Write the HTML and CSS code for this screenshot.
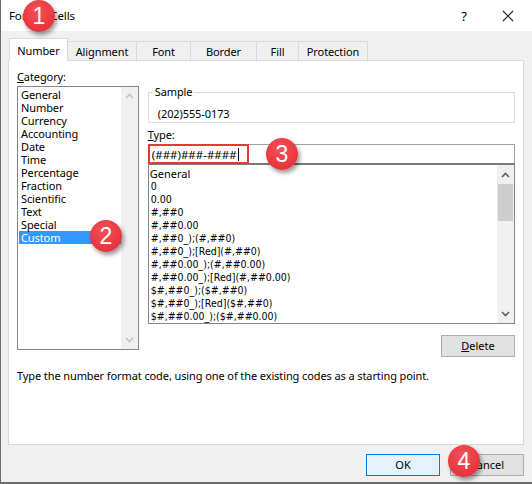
FILE: index.html
```html
<!DOCTYPE html>
<html>
<head>
<meta charset="utf-8">
<link rel="stylesheet" href="styles.css">
</head>
<body>
<div class="window">
  <div class="titlebar">
    <span class="title">Format Cells</span>
    <span class="help">?</span>
    <span class="close"><svg width="12" height="12" viewBox="0 0 12 12"><path d="M1 1L11 11M11 1L1 11" stroke="#222" stroke-width="1.1" fill="none"/></svg></span>
  </div>
  <div class="body">
    <div class="tabs">
      <div class="tab active">Number</div>
      <div class="tab w-align">Alignment</div>
      <div class="tab w-font">Font</div>
      <div class="tab w-border">Border</div>
      <div class="tab w-fill">Fill</div>
      <div class="tab w-prot">Protection</div>
    </div>
    <div class="panel">
      <div class="cols">
        <div class="leftcol">
          <div class="label"><u>C</u>ategory:</div>
          <div class="listbox">
            <div class="items">
              <div class="item">General</div>
              <div class="item">Number</div>
              <div class="item">Currency</div>
              <div class="item">Accounting</div>
              <div class="item">Date</div>
              <div class="item">Time</div>
              <div class="item">Percentage</div>
              <div class="item">Fraction</div>
              <div class="item">Scientific</div>
              <div class="item">Text</div>
              <div class="item">Special</div>
              <div class="item selected">Custom</div>
            </div>
            <div class="vscroll">
              <svg class="arr" width="9" height="6" viewBox="0 0 9 6"><path d="M1 5L4.5 1.5L8 5" stroke="#c2c2c2" stroke-width="1.6" fill="none"/></svg>
              <div class="track"></div>
              <svg class="arr" width="9" height="6" viewBox="0 0 9 6"><path d="M1 1L4.5 4.5L8 1" stroke="#c2c2c2" stroke-width="1.6" fill="none"/></svg>
            </div>
          </div>
        </div>
        <div class="rightcol">
          <fieldset class="group">
            <legend>Sample</legend>
            <div class="sample">(202)555-0173</div>
          </fieldset>
          <div class="label typelabel"><u>T</u>ype:</div>
          <div class="typeinput"><span class="highlight">(###)###-####<span class="caret"></span></span></div>
          <div class="fmtlist">
            <div class="fitems">
              <div class="fitem">General</div>
              <div class="fitem">0</div>
              <div class="fitem">0.00</div>
              <div class="fitem">#,##0</div>
              <div class="fitem">#,##0.00</div>
              <div class="fitem">#,##0_);(#,##0)</div>
              <div class="fitem">#,##0_);[Red](#,##0)</div>
              <div class="fitem">#,##0.00_);(#,##0.00)</div>
              <div class="fitem">#,##0.00_);[Red](#,##0.00)</div>
              <div class="fitem">$#,##0_);($#,##0)</div>
              <div class="fitem">$#,##0_);[Red]($#,##0)</div>
              <div class="fitem">$#,##0.00_);($#,##0.00)</div>
            </div>
            <div class="vscroll dark">
              <svg class="arr" width="9" height="6" viewBox="0 0 9 6"><path d="M1 5L4.5 1.5L8 5" stroke="#606060" stroke-width="1.6" fill="none"/></svg>
              <div class="track"><div class="thumb"></div></div>
              <svg class="arr" width="9" height="6" viewBox="0 0 9 6"><path d="M1 1L4.5 4.5L8 1" stroke="#606060" stroke-width="1.6" fill="none"/></svg>
            </div>
          </div>
          <div class="delrow"><button class="btn"><u>D</u>elete</button></div>
        </div>
      </div>
      <div class="desc">Type the number format code, using one of the existing codes as a starting point.</div>
    </div>
    <div class="footer">
      <button class="btn ok">OK</button>
      <button class="btn">Cancel</button>
    </div>
  </div>
  <div class="badge b1">1</div>
  <div class="badge b2">2</div>
  <div class="badge b3">3</div>
  <div class="badge b4">4</div>
</div>
</body>
</html>
```
FILE: styles.css
```css
* { box-sizing: border-box; }
html, body { margin: 0; padding: 0; }
body {
  width: 532px;
  height: 484px;
  overflow: hidden;
  font-family: "Noto Sans", "Liberation Sans", sans-serif;
  font-size: 11px;
  letter-spacing: -0.1px;
  color: #000;
  background: #fff;
}
.window {
  position: relative;
  width: 532px;
  height: 484px;
  border-left: 1px solid #6b6b6b;
  border-bottom: 2px solid #6b6b6b;
  display: flex;
  flex-direction: column;
}
.titlebar {
  height: 31px;
  background: #fff;
  display: flex;
  align-items: center;
  padding-left: 8px;
}
.title { font-size: 11.5px; flex: 1; }
.help { width: 20px; font-size: 13px; margin-right: 24px; text-align: center; }
.close { width: 20px; margin-right: 14px; display: flex; justify-content: center; }
.body {
  flex: 1;
  background: #f0f0f0;
  padding: 7px 8px 0 7px;
  display: flex;
  flex-direction: column;
}
.tabs {
  display: flex;
  height: 22px;
  align-items: flex-end;
  margin-left: 1px;
  position: relative;
  z-index: 1;
}
.tab {
  height: 19px;
  border: 1px solid #d9d9d9;
  border-left: none;
  border-bottom: none;
  display: flex;
  align-items: center;
  justify-content: center;
  background: #f0f0f0;
  line-height: 1;
  padding-top: 1px;
}
.tab.active {
  width: 59px;
  background: #fff;
  border-left: 1px solid #d9d9d9;
  margin-bottom: -1px;
  height: 23px;
}
.w-align { width: 69px; }
.w-font { width: 54px; }
.w-border { width: 66px; }
.w-fill { width: 42px; }
.w-prot { width: 69px; }
.panel {
  height: 385px;
  background: #fff;
  border: 1px solid #d9d9d9;
  padding: 8px 8px 0 8px;
  display: flex;
  flex-direction: column;
}
.cols { display: flex; gap: 9px; }
.leftcol { width: 122px; }
.label { height: 17px; line-height: 15px; }
.listbox {
  height: 264px;
  border: 1px solid #828790;
  display: flex;
  background: #fff;
}
.items { flex: 1; padding-top: 1px; padding-left: 1px; }
.item { height: 13px; line-height: 13px; padding-left: 2px; white-space: nowrap; }
.item.selected { background: #3399ff; color: #fff; }
.vscroll {
  width: 17px;
  background: #f0f0f0;
  display: flex;
  flex-direction: column;
  align-items: center;
}
.vscroll .arr { margin: 6px 0; flex: none; }
.vscroll .track { flex: 1; width: 100%; }
.vscroll.dark .arr { margin: 7px 0 6px; }
.thumb { width: 15px; margin: 0 auto; height: 37px; background: #cdcdcd; }
.rightcol { width: 368px; display: flex; flex-direction: column; }
.group {
  margin: 16px 0 0 0;
  padding: 0 0 0 9px;
  border: 1px solid #dcdcdc;
  height: 38px;
}
.group legend { padding: 0 2px; margin-left: -5px; line-height: 14px; }
.sample { line-height: 16px; padding-top: 7px; }
.typelabel { margin-top: 4px; }
.typeinput {
  height: 20px;
  border: 1px solid #a0a0a0;
  border-bottom-color: #7a7a7a;
  background: #fff;
  display: flex;
  align-items: stretch;
}
.highlight {
  width: 101px;
  border: 2px solid #e53935;
  margin: -1px 0 -1px -1px;
  padding-left: 2px;
  display: flex;
  align-items: center;
  font-size: 11.5px;
  letter-spacing: 0;
}
.caret { width: 1px; height: 13px; background: #000; margin-left: 1px; }
.fmtlist {
  height: 160px;
  border: 1px solid #828790;
  border-top: 1px solid #7a7a7a;
  display: flex;
  background: #fff;
}
.fitems { flex: 1; padding-top: 2px; }
.fitem {
  height: 13px;
  line-height: 13px;
  padding-left: 2px;
  font-family: "DejaVu Sans Condensed", "DejaVu Sans", sans-serif;
  font-size: 10.5px;
  letter-spacing: 0;
  white-space: nowrap;
}
.fitem:first-child { font-family: "Noto Sans", sans-serif; font-size: 11px; padding-left: 1px; }
.delrow { display: flex; justify-content: flex-end; margin-top: 11px; }
.btn {
  width: 74px;
  height: 22px;
  background: #e1e1e1;
  border: 1px solid #adadad;
  font-family: "Noto Sans", "Liberation Sans", sans-serif;
  font-size: 11px;
  color: #000;
  padding: 0;
  line-height: 18px;
}
.desc { margin-top: 11px; line-height: 16px; }
.footer {
  display: flex;
  justify-content: flex-end;
  gap: 10px;
  padding-top: 9px;
}
.btn.ok { background: #e5f1fb; border-color: #0078d7; }
.badge {
  position: absolute;
  width: 32px;
  height: 32px;
  border-radius: 50%;
  background: radial-gradient(circle at 45% 35%, #f4525a 0%, #ea3a42 55%, #d82e36 100%);
  box-shadow: 2px 3px 4px rgba(0,0,0,0.4);
  color: #fff;
  font-family: "Liberation Sans", "Noto Sans", sans-serif;
  font-size: 23px;
  letter-spacing: 0;
  display: flex;
  align-items: center;
  justify-content: center;
  z-index: 5;
}
.b1 { left: 22px; top: 0px; }
.b2 { left: 89px; top: 220px; }
.b3 { left: 265px; top: 138px; }
.b4 { left: 447px; top: 445px; }
```
